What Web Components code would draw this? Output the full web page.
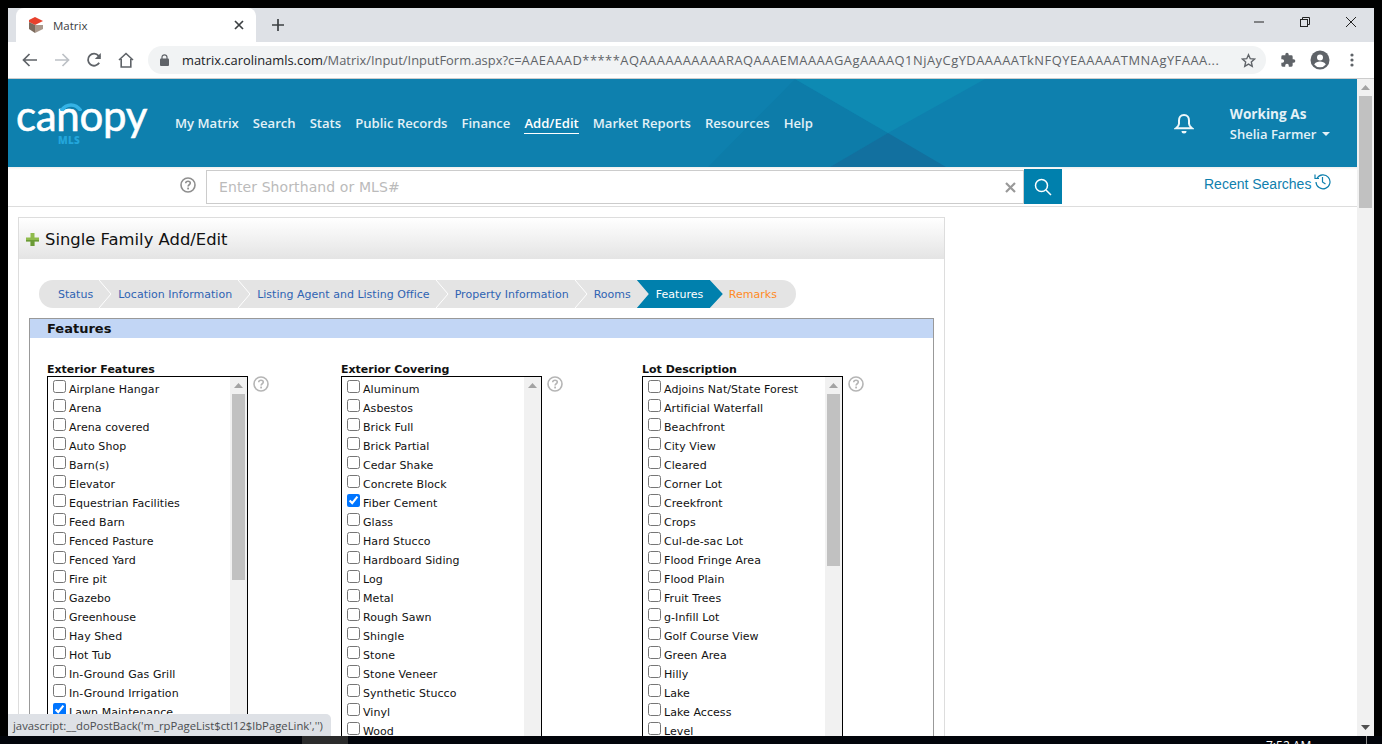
<!DOCTYPE html>
<html>
<head>
<meta charset="utf-8">
<title>Matrix</title>
<style>
  html, body { margin: 0; height: 744px; overflow: hidden; background: #000; }
  body { display: flex; flex-direction: column; width: 1382px; }
</style>
</head>
<body>
<browser-window>
  <mls-header></mls-header>
  <mls-search></mls-search>
  <form-panel heading="Single Family Add/Edit">
    <step-nav steps="Status|Location Information|Listing Agent and Listing Office|Property Information|Rooms|Features|Remarks" active="Features" next="Remarks"></step-nav>
    <form-section heading="Features">
      <check-list label="Exterior Features" width="294" thumb="186"
        items="Airplane Hangar|Arena|Arena covered|Auto Shop|Barn(s)|Elevator|Equestrian Facilities|Feed Barn|Fenced Pasture|Fenced Yard|Fire pit|Gazebo|Greenhouse|Hay Shed|Hot Tub|In-Ground Gas Grill|In-Ground Irrigation|*Lawn Maintenance"></check-list>
      <check-list label="Exterior Covering" width="301" thumb="0"
        items="Aluminum|Asbestos|Brick Full|Brick Partial|Cedar Shake|Concrete Block|*Fiber Cement|Glass|Hard Stucco|Hardboard Siding|Log|Metal|Rough Sawn|Shingle|Stone|Stone Veneer|Synthetic Stucco|Vinyl|Wood"></check-list>
      <check-list label="Lot Description" width="260" thumb="172"
        items="Adjoins Nat/State Forest|Artificial Waterfall|Beachfront|City View|Cleared|Corner Lot|Creekfront|Crops|Cul-de-sac Lot|Flood Fringe Area|Flood Plain|Fruit Trees|g-Infill Lot|Golf Course View|Green Area|Hilly|Lake|Lake Access|Level"></check-list>
    </form-section>
  </form-panel>
</browser-window>
<task-strip></task-strip>

<script>
const HELP_ICON = `<svg width="16" height="16" viewBox="0 0 16 16" fill="none">
  <circle cx="8" cy="8" r="7" stroke="currentColor" stroke-width="1.6"/>
  <path d="M5.7 6.3C5.8 4.9 6.8 4.2 8 4.2c1.3 0 2.3.8 2.3 1.9 0 1.7-2.2 1.6-2.2 3.4" stroke="currentColor" stroke-width="1.6"/>
  <rect x="7.2" y="10.6" width="1.8" height="1.8" fill="currentColor"/>
</svg>`;

class BrowserWindow extends HTMLElement {
  constructor() {
    super();
    this.shadow = this.attachShadow({ mode: "open" });
  }

  connectedCallback() {
    this.shadow.innerHTML = `
      <style>
        :host { display: flex; flex-direction: column; height: 728px; margin: 8px 8px 0; background: #fff; position: relative; overflow: hidden; }
        .view { flex: 1; min-height: 0; display: flex; }
        .page { flex: 1; min-width: 0; display: flex; flex-direction: column; }
      </style>
      <chrome-tabs></chrome-tabs>
      <chrome-toolbar></chrome-toolbar>
      <div class="view">
        <div class="page"><slot></slot></div>
        <page-scrollbar></page-scrollbar>
      </div>
      <status-bubble text="javascript:__doPostBack('m_rpPageList$ctl12$lbPageLink','')"></status-bubble>
    `;
  }
}

class ChromeTabs extends HTMLElement {
  constructor() {
    super();
    this.shadow = this.attachShadow({ mode: "open" });
  }

  connectedCallback() {
    this.shadow.innerHTML = `
      <style>
        :host { display: flex; height: 34px; background: #dee1e6; flex: none; color: #3c4043; }
        .tab { width: 240px; margin-left: 8px; background: #fff; border-radius: 8px 8px 0 0; display: flex; align-items: center; padding: 0 12px; box-sizing: border-box; font: 11.5px "Open Sans", sans-serif; color: #3c4043; }
        .fav { margin-right: 10px; display: block; }
        .name { flex: 1; }
        .x, .plus { display: block; }
        .plus { margin: 10px 0 0 15px; }
        .caption { margin-left: auto; display: flex; align-items: flex-start; }
        .caption span { width: 46px; height: 28px; display: flex; align-items: center; justify-content: center; }
      </style>
      <div class="tab">
        <svg class="fav" width="15" height="16" viewBox="0 0 15 16">
          <polygon points="7,0 15,4 7,8 1,5 1,3" fill="#e8412c"/>
          <polygon points="1,5 7,8 7,16 1,12" fill="#7b6a5d"/>
          <polygon points="7,8 15,8 15,12 7,16" fill="#a9978a"/>
        </svg>
        <span class="name">Matrix</span>
        <svg class="x" width="10" height="10" viewBox="0 0 10 10"><path d="M1 1l8 8M9 1l-8 8" stroke="#3c4043" stroke-width="1.7"/></svg>
      </div>
      <svg class="plus" width="14" height="14" viewBox="0 0 14 14"><path d="M7 1v12M1 7h12" stroke="#3c4043" stroke-width="1.7"/></svg>
      <div class="caption">
        <span><svg width="10" height="10" viewBox="0 0 10 10"><path d="M0 5h10" stroke="#222" stroke-width="1"/></svg></span>
        <span><svg width="10" height="10" viewBox="0 0 10 10" fill="none" stroke="#222"><rect x=".5" y="2.5" width="7" height="7"/><path d="M2.5 2.5v-2h7v7h-2"/></svg></span>
        <span><svg width="10" height="10" viewBox="0 0 10 10"><path d="M0 0l10 10M10 0L0 10" stroke="#222" stroke-width="1"/></svg></span>
      </div>
    `;
  }
}

class ChromeToolbar extends HTMLElement {
  constructor() {
    super();
    this.shadow = this.attachShadow({ mode: "open" });
  }

  connectedCallback() {
    this.shadow.innerHTML = `
      <style>
        :host { display: flex; align-items: center; height: 37px; box-sizing: border-box; background: #fff; border-bottom: 1px solid #ccc; flex: none; }
        .btn { width: 32px; display: flex; justify-content: center; align-items: center; flex: none; }
        .omni { margin-left: 6px; width: 1118px; height: 28px; border-radius: 14px; background: #f1f3f4; display: flex; align-items: center; box-sizing: border-box; padding: 0 10px 0 12px; flex: none; }
        .url { margin-left: 13px; width: 1039px; font: 12.900px "Open Sans", sans-serif; color: #5f6368; white-space: nowrap; overflow: hidden; flex: none; }
        .url b { font-weight: 400; color: #202124; }
        .url i { font-style: normal; letter-spacing: .5px; }
        .lock { flex: none; }
        .star { margin-left: 20px; flex: none; }
        .right { display: flex; margin-left: 6px; }
      </style>
      <span class="btn" style="margin-left:6px"><svg width="16" height="14" viewBox="0 0 16 14" fill="none" stroke="#5f6368" stroke-width="1.7"><path d="M15 7H2M7.5 1L1.5 7l6 6"/></svg></span>
      <span class="btn"><svg width="16" height="14" viewBox="0 0 16 14" fill="none" stroke="#bdc1c6" stroke-width="1.7"><path d="M1 7h13M8.500 1l6 6-6 6"/></svg></span>
      <span class="btn"><svg width="16" height="16" viewBox="0 0 16 16" fill="none" stroke="#5f6368" stroke-width="1.8"><path d="M13.200 10.800A6 6 0 1 1 12.600 3.800L14 5.200"/><path d="M14.800 1v6h-6z" fill="#5f6368" stroke="none"/></svg></span>
      <span class="btn"><svg width="16" height="16" viewBox="0 0 16 16" fill="none" stroke="#5f6368" stroke-width="1.6"><path d="M1 8l7-6.500L15 8M3.200 7v8h9.600V7"/></svg></span>
      <div class="omni">
        <svg class="lock" width="9" height="12" viewBox="0 0 9 12"><path d="M2 5V3.300a2.500 2.500 0 0 1 5 0V5" fill="none" stroke="#5f6368" stroke-width="1.200"/><rect y="4.500" width="9" height="7.500" rx="1" fill="#5f6368"/></svg>
        <div class="url"><b>matrix.carolinamls.com</b>/Matrix/Input/InputForm.aspx?c=<i>AAEAAAD*****AQAAAAAAAAAARAQAAAEMAAAAGAgAAAAQ1NjAyCgYDAAAAATkNFQYEAAAAATMNAgYFAAA...</i></div>
        <svg class="star" width="15" height="15" viewBox="0 0 24 24" fill="none" stroke="#5f6368" stroke-width="2.200"><path d="M12 2.800l2.800 6.300 6.900.7-5.200 4.600 1.500 6.800-6-3.500-6 3.500 1.500-6.800-5.200-4.600 6.900-.7z"/></svg>
      </div>
      <div class="right">
        <span class="btn"><svg width="16" height="16" viewBox="0 0 24 24" fill="#5f6368"><path d="M20.500 11H19V7a2 2 0 0 0-2-2h-4V3.500a2.500 2.500 0 0 0-5 0V5H4a2 2 0 0 0-2 2v3.800h1.500a2.700 2.700 0 0 1 0 5.400H2V20a2 2 0 0 0 2 2h3.800v-1.500a2.700 2.700 0 0 1 5.400 0V22H17a2 2 0 0 0 2-2v-4h1.500a2.500 2.500 0 0 0 0-5z"/></svg></span>
        <span class="btn"><svg width="20" height="20" viewBox="0 0 20 20"><circle cx="10" cy="10" r="9.500" fill="#5f6368"/><circle cx="10" cy="7.500" r="3" fill="#fff"/><path d="M4.200 14.400c1.200-2 3.500-2.800 5.800-2.800s4.600.8 5.800 2.800a7.300 7.300 0 0 1-11.600 0z" fill="#fff"/></svg></span>
        <span class="btn"><svg width="4" height="14" viewBox="0 0 4 14" fill="#5f6368"><circle cx="2" cy="2" r="1.600"/><circle cx="2" cy="7" r="1.600"/><circle cx="2" cy="12" r="1.600"/></svg></span>
      </div>
    `;
  }
}

class PageScrollbar extends HTMLElement {
  constructor() {
    super();
    this.shadow = this.attachShadow({ mode: "open" });
  }

  connectedCallback() {
    this.shadow.innerHTML = `
      <style>
        :host { display: flex; flex-direction: column; width: 17px; background: #f1f1f1; flex: none; }
        .arrow { height: 17px; display: flex; align-items: center; justify-content: center; flex: none; }
        .thumb { height: 112px; background: #c1c1c1; margin: 0 2px; flex: none; }
        .rest { flex: 1; }
      </style>
      <div class="arrow"><svg width="9" height="5"><polygon points="0,5 4.500,0 9,5" fill="#a3a3a3"/></svg></div>
      <div class="thumb"></div>
      <div class="rest"></div>
      <div class="arrow"><svg width="9" height="5"><polygon points="0,0 9,0 4.500,5" fill="#505050"/></svg></div>
    `;
  }
}

class StatusBubble extends HTMLElement {
  constructor() {
    super();
    this.shadow = this.attachShadow({ mode: "open" });
  }

  connectedCallback() {
    this.shadow.innerHTML = `
      <style>
        :host { position: absolute; left: 0; bottom: 0; height: 22px; display: flex; align-items: center; padding: 0 8px 0 5px; background: #dee1e6; border-top-right-radius: 5px; font: 11.300px "Open Sans", sans-serif; color: #4a4d50; white-space: nowrap; }
      </style>
      ${this.getAttribute("text")}
    `;
  }
}

class TaskStrip extends HTMLElement {
  constructor() {
    super();
    this.shadow = this.attachShadow({ mode: "open" });
  }

  connectedCallback() {
    this.shadow.innerHTML = `
      <style>
        :host { display: flex; height: 8px; overflow: hidden; background: #02040a; flex: none; }
        .app { margin-left: 302px; width: 46px; background: #2b2b2b; flex: none; }
        .clock { margin-left: 918px; padding-top: 2px; font: 12px/16px "Open Sans", sans-serif; color: #fff; width: 56px; flex: none; }
        .line { margin-left: 44px; width: 1px; background: #8a8a8a; flex: none; }
      </style>
      <div class="app"></div>
      <div class="clock">7:52 AM</div>
      <div class="line"></div>
    `;
  }
}

class MlsHeader extends HTMLElement {
  constructor() {
    super();
    this.shadow = this.attachShadow({ mode: "open" });
  }

  connectedCallback() {
    const links = ["My Matrix", "Search", "Stats", "Public Records", "Finance", "Add/Edit", "Market Reports", "Resources", "Help"];
    this.shadow.innerHTML = `
      <style>
        :host { display: flex; align-items: center; height: 88px; flex: none; background: #0e80ae; position: relative; overflow: hidden; font-family: "Open Sans", sans-serif; color: #e3f1f7; }
        .shapes { position: absolute; left: 0; top: 0; }
        .logo { position: relative; width: 167px; height: 88px; flex: none; color: #fff; }
        .word { position: absolute; left: 8px; top: 17px; font: 400 42px/38px Lato, sans-serif; letter-spacing: -.3px; -webkit-text-stroke: .6px #fff; }
        .arc { position: absolute; left: 52px; top: 24px; }
        .mls { position: absolute; left: 50px; top: 57px; font: 800 10px/9px "Open Sans", sans-serif; letter-spacing: .3px; color: #23a6db; }
        nav { position: relative; display: flex; gap: 14px; font-size: 13.100px; font-weight: 600; margin-top: 2px; flex: none; }
        nav a { display: block; line-height: 18px; padding-bottom: 1px; border-bottom: 1px solid transparent; }
        nav a.on { border-bottom-color: #fff; color: #fff; }
        .bell { position: relative; margin-left: 361px; display: block; flex: none; }
        .user { position: relative; margin-left: 36px; font-size: 13px; font-weight: 600; line-height: 20px; flex: none; margin-top: 2px; }
        .user div + div { display: flex; align-items: center; gap: 6px; }
        .user b { font-weight: 700; font-size: 13.600px; }
      </style>
      <svg class="shapes" width="1350" height="88">
        <polygon points="700,88 787,0 880,54 822,88" fill="#0d7ca9"/>
        <polygon points="787,0 977,0 880,54" fill="#0e8ab3"/>
        <polygon points="880,54 822,88 938,88" fill="#12709f"/>
      </svg>
      <div class="logo">
        <span class="word">canopy</span>
        <svg class="arc" width="22" height="8"><path d="M1 8C4 3.500 7 2 11 2s7 1.500 10 6" fill="none" stroke="#35b3e6" stroke-width="3.500"/></svg>
        <span class="mls">MLS</span>
      </div>
      <nav>${links.map((l) => `<a class="${l === "Add/Edit" ? "on" : ""}">${l}</a>`).join("")}</nav>
      <svg class="bell" width="20" height="21" viewBox="0 0 20 21" fill="none" stroke="#eef7fa" stroke-width="2"><path d="M10 2c-3.400 0-5 2.600-5 5.400v3.400c0 1.800-1.200 3-3 4.400h16c-1.800-1.400-3-2.600-3-4.400V7.400C15 4.600 13.400 2 10 2z"/><path d="M7.500 18a2.500 2.500 0 0 0 5 0z" fill="#eef7fa" stroke="none"/></svg>
      <div class="user">
        <div><b>Working As</b></div>
        <div>Shelia Farmer <svg width="8" height="4"><polygon points="0,0 8,0 4,4" fill="#e3f1f7"/></svg></div>
      </div>
    `;
  }
}

class MlsSearch extends HTMLElement {
  constructor() {
    super();
    this.shadow = this.attachShadow({ mode: "open" });
  }

  connectedCallback() {
    this.shadow.innerHTML = `
      <style>
        :host { display: flex; height: 40px; flex: none; box-sizing: border-box; border-bottom: 1px solid #ddd; padding: 2px 0 0 172px; background: linear-gradient(#eee, #fff 3px); }
        .q { color: #8f8f8f; margin-top: 8px; display: block; flex: none; }
        .field { margin-left: 10px; width: 818px; height: 34px; margin-top: 1px; box-sizing: border-box; border: 1px solid #ccc; display: flex; align-items: center; padding: 0 7px 0 12px; font: 14px "DejaVu Sans", sans-serif; color: #bbb; letter-spacing: .1px; flex: none; }
        .ph { flex: 1; }
        .go { width: 38px; height: 35px; background: #0080ad; display: flex; align-items: center; justify-content: center; flex: none; }
        .recent { margin-left: 142px; margin-top: 5px; display: flex; align-items: flex-start; font: 14px/20px "Liberation Sans", sans-serif; color: #0e80ae; flex: none; }
        .recent svg { margin-left: 3px; margin-top: -1px; }
      </style>
      <span class="q">${HELP_ICON}</span>
      <div class="field">
        <span class="ph">Enter Shorthand or MLS#</span>
        <svg width="11" height="11" viewBox="0 0 11 11"><path d="M1 1l9 9M10 1l-9 9" stroke="#999" stroke-width="2.200"/></svg>
      </div>
      <div class="go"><svg width="18" height="18" viewBox="0 0 18 18" fill="none" stroke="#fff" stroke-width="1.500"><circle cx="7.500" cy="7.500" r="6"/><path d="M12 12l5 5"/></svg></div>
      <div class="recent">Recent Searches
        <svg width="17" height="17" viewBox="0 0 17 17" fill="none" stroke="#0e80ae" stroke-width="1.200"><path d="M3 5.200A7 7 0 1 1 2 9"/><path d="M1 1.500v4h4"/><path d="M8.500 4v5l3 2"/></svg>
      </div>
    `;
  }
}

class FormPanel extends HTMLElement {
  constructor() {
    super();
    this.shadow = this.attachShadow({ mode: "open" });
  }

  get heading() {
    return this.getAttribute("heading");
  }

  connectedCallback() {
    this.shadow.innerHTML = `
      <style>
        :host { display: block; flex: 1; min-height: 0; width: 927px; box-sizing: border-box; margin: 10px 0 0 10px; border: 1px solid #ddd; border-bottom: 0; overflow: hidden; font-family: "DejaVu Sans", sans-serif; }
        .head { height: 41px; box-sizing: border-box; padding: 1px 0 0 7px; display: flex; align-items: center; gap: 6px; background: linear-gradient(#fff, #e4e4e4); font: 16.400px "DejaVu Sans", sans-serif; color: #111; }
        .body { padding: 21px 10px 0 10px; }
      </style>
      <div class="head">
        <svg width="13" height="13" viewBox="0 0 13 13"><path d="M4.500 0h4v4.500H13v4H8.500V13h-4V8.500H0v-4h4.500z" fill="#8fbb4c"/><path d="M4.500 8.500V13h4V8.500H13V7H0v1.500z" fill="#4d7f25" opacity=".55"/></svg>
        ${this.heading}
      </div>
      <div class="body"><slot></slot></div>
    `;
  }
}

class StepNav extends HTMLElement {
  constructor() {
    super();
    this.shadow = this.attachShadow({ mode: "open" });
  }

  get steps() {
    return this.getAttribute("steps").split("|");
  }

  get active() {
    return this.getAttribute("active");
  }

  get next() {
    return this.getAttribute("next");
  }

  item(step, i) {
    const on = step === this.active;
    const cls = on ? "on" : step === this.next ? "next" : "";
    const chevron = on || step === this.next || this.steps[i + 1] === this.active ? ""
      : `<svg class="chev" width="13" height="28"><polyline points="0,0 12,14 0,28" fill="none" stroke="#fff"/></svg>`;
    return `<li class="${cls}">${step}${chevron}</li>`;
  }

  render() {
    this.shadow.innerHTML = `
      <style>
        :host { display: block; margin-left: 10px; }
        ul { display: inline-flex; margin: 0; padding: 0 13px 0 0; list-style: none; height: 28px; background: #e4e4e4; border-radius: 14px; font: 11px/30px "DejaVu Sans", sans-serif; letter-spacing: .015px; color: #2f63b3; white-space: nowrap; }
        li { position: relative; padding: 0 6px 0 19px; }
        .chev { position: absolute; right: -13px; top: 0; z-index: 1; }
        li.on { z-index: 2; width: 86px; box-sizing: border-box; margin-right: -13px; padding-right: 0; background: #0080ad; color: #fff; clip-path: polygon(0 0, 73px 0, 86px 14px, 73px 28px, 0 28px, 12px 14px); }
        li.next { color: #ff8a1f; }
      </style>
      <ul>${this.steps.map((s, i) => this.item(s, i)).join("")}</ul>
    `;
  }

  connectedCallback() {
    this.render();
  }
}

class FormSection extends HTMLElement {
  constructor() {
    super();
    this.shadow = this.attachShadow({ mode: "open" });
  }

  connectedCallback() {
    this.shadow.innerHTML = `
      <style>
        :host { display: block; margin-top: 10px; border: 1px solid #999; border-bottom: 0; }
        .title { height: 19px; background: #c2d6f5; padding-left: 17px; font: 700 13px/19px "DejaVu Sans", sans-serif; color: #111; }
        .cols { display: flex; padding: 24px 0 0 17px; }
      </style>
      <div class="title">${this.getAttribute("heading")}</div>
      <div class="cols"><slot></slot></div>
    `;
  }
}

class CheckList extends HTMLElement {
  constructor() {
    super();
    this.shadow = this.attachShadow({ mode: "open" });
  }

  get label() {
    return this.getAttribute("label");
  }

  get items() {
    return this.getAttribute("items").split("|");
  }

  get thumb() {
    return Number(this.getAttribute("thumb"));
  }

  connectedCallback() {
    const rows = this.items.map((it) => {
      const on = it.startsWith("*");
      return `<label><input type="checkbox" ${on ? "checked" : ""}>${on ? it.slice(1) : it}</label>`;
    }).join("");
    this.shadow.innerHTML = `
      <style>
        :host { display: block; width: ${this.getAttribute("width")}px; flex: none; font: 11px/19px "DejaVu Sans", sans-serif; letter-spacing: .06px; color: #111; }
        .lab { font-weight: 700; line-height: 16px; height: 14px; letter-spacing: 0; color: #111; }
        .wrap { display: flex; align-items: flex-start; gap: 5px; }
        .box { width: 201px; height: 400px; box-sizing: border-box; border: 1px solid #000; display: flex; overflow: hidden; flex: none; }
        .rows { flex: 1; padding-top: 3px; min-width: 0; }
        label { display: flex; align-items: center; height: 19px; white-space: nowrap; padding-left: 5px; }
        input { margin: -6px 3px 0 0; width: 13px; height: 13px; flex: none; }
        .bar { width: 17px; background: #f1f1f1; flex: none; }
        .up { height: 17px; display: flex; align-items: center; justify-content: center; }
        .th { height: ${this.thumb}px; background: #c1c1c1; margin: 0 2px; }
        .help { color: #b5b5b5; display: block; }
      </style>
      <div class="lab">${this.label}</div>
      <div class="wrap">
        <div class="box">
          <div class="rows">${rows}</div>
          <div class="bar">
            <div class="up"><svg width="9" height="5"><polygon points="0,5 4.500,0 9,5" fill="#a3a3a3"/></svg></div>
            <div class="th"></div>
          </div>
        </div>
        <span class="help">${HELP_ICON}</span>
      </div>
    `;
  }
}

customElements.define("browser-window", BrowserWindow);
customElements.define("chrome-tabs", ChromeTabs);
customElements.define("chrome-toolbar", ChromeToolbar);
customElements.define("page-scrollbar", PageScrollbar);
customElements.define("status-bubble", StatusBubble);
customElements.define("task-strip", TaskStrip);
customElements.define("mls-header", MlsHeader);
customElements.define("mls-search", MlsSearch);
customElements.define("form-panel", FormPanel);
customElements.define("step-nav", StepNav);
customElements.define("form-section", FormSection);
customElements.define("check-list", CheckList);
</script>
</body>
</html>
